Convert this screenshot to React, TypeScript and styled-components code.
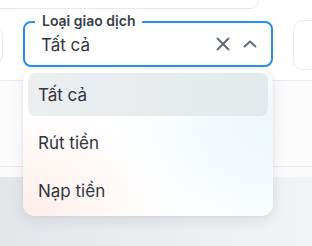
import React from "react";
import styled, { createGlobalStyle } from "styled-components";

const Global = createGlobalStyle`
  html, body { margin: 0; padding: 0; background: #ffffff; }
  body { font-family: Inter, "Noto Sans", "Liberation Sans", sans-serif; overflow: hidden; }
`;

const Page = styled.div`
  width: 312px;
  height: 246px;
  display: flex;
  flex-direction: column;
  background: #ffffff;
  overflow: hidden;
  position: relative;
`;

const TopCard = styled.div`
  height: 8px;
  margin-left: -20px;
  width: 277px;
  border: 1px solid #e6e8eb;
  border-top: none;
  border-radius: 0 0 12px 12px;
  background: #ffffff;
  flex-shrink: 0;
`;

const FilterRow = styled.div`
  display: flex;
  align-items: center;
  gap: 20px;
  margin-top: 12px;
  margin-left: -29px;
  height: 48px;
  flex-shrink: 0;
`;

const SideBox = styled.div<{ $h: number; $w: number }>`
  width: ${(p) => p.$w}px;
  height: ${(p) => p.$h}px;
  border: 1px solid #e8eaed;
  border-radius: 10px;
  background: #ffffff;
  flex-shrink: 0;
`;

const SelectWrap = styled.div`
  position: relative;
  width: 250px;
  flex-shrink: 0;
  align-self: flex-start;
`;

const Field = styled.div`
  position: relative;
  box-sizing: border-box;
  height: 46px;
  border: 2px solid #2590f0;
  border-radius: 8px;
  display: flex;
  align-items: center;
  padding: 0 12px 0 16px;
  background: #ffffff;
`;

const Label = styled.span`
  position: absolute;
  top: -10px;
  left: 10px;
  padding: 0 7px;
  background: #ffffff;
  font-size: 14px;
  font-weight: 600;
  line-height: 16px;
  color: #38404a;
`;

const Value = styled.span`
  flex: 1;
  font-size: 17px;
  color: #2f353d;
  line-height: 20px;
  padding-top: 1px;
`;

const IconBtn = styled.span`
  display: flex;
  align-items: center;
  justify-content: center;
  width: 18px;
  height: 18px;
  color: #606b76;
  margin-left: 9px;
`;

const Menu = styled.div`
  position: absolute;
  top: 49px;
  left: 0;
  width: 250px;
  box-sizing: border-box;
  padding: 3px 5px 4px;
  display: flex;
  flex-direction: column;
  gap: 5px;
  border-radius: 11px;
  background:
    radial-gradient(ellipse 140px 110px at 0% 100%, rgba(253, 236, 232, 0.9), rgba(253, 236, 232, 0) 100%),
    radial-gradient(ellipse 160px 120px at 100% 40%, rgba(236, 247, 252, 0.95), rgba(236, 247, 252, 0) 100%),
    #ffffff;
  box-shadow: 0 4px 14px rgba(30, 40, 60, 0.1), 0 0 3px rgba(30, 40, 60, 0.06);
  z-index: 2;
`;

const Item = styled.div<{ $active?: boolean }>`
  height: 43px;
  display: flex;
  align-items: center;
  padding-left: 10px;
  border-radius: 8px;
  font-size: 17px;
  color: #2f353d;
  background: ${(p) =>
    p.$active ? "linear-gradient(90deg, #eceef0, #e3e9ea)" : "transparent"};
`;

const Section = styled.div`
  margin-top: 11px;
  height: 85px;
  border-top: 1px solid #ebedf0;
  border-bottom: 1px solid #e6e8eb;
  background: #fcfcfd;
  flex-shrink: 0;
`;

const Gap = styled.div`
  height: 10px;
  background: #fbfbfc;
  flex-shrink: 0;
`;

const Footer = styled.div`
  flex: 1;
  background: linear-gradient(90deg, #e3e6e9 0%, #eceef0 60%, #f2f3f5 100%);
`;

const XIcon = () => (
  <svg width="14" height="14" viewBox="0 0 14 14" fill="none">
    <path d="M1.5 1.5 L12.5 12.5 M12.5 1.5 L1.5 12.5" stroke="currentColor" strokeWidth="2" strokeLinecap="round" />
  </svg>
);

const ChevronUp = () => (
  <svg width="14" height="10" viewBox="0 0 14 10" fill="none">
    <path d="M1.5 7.5 L7 2.5 L12.5 7.5" stroke="currentColor" strokeWidth="2" strokeLinecap="round" strokeLinejoin="round" />
  </svg>
);

export default function App() {
  return (
    <>
      <Global />
      <Page>
        <TopCard />
        <FilterRow>
          <SideBox $w={30} $h={37} />
          <SelectWrap>
            <Field>
              <Label>Loại giao dịch</Label>
              <Value>Tất cả</Value>
              <IconBtn>
                <XIcon />
              </IconBtn>
              <IconBtn>
                <ChevronUp />
              </IconBtn>
            </Field>
            <Menu>
              <Item $active>Tất cả</Item>
              <Item>Rút tiền</Item>
              <Item>Nạp tiền</Item>
            </Menu>
          </SelectWrap>
          <SideBox $w={60} $h={48} />
        </FilterRow>
        <Section />
        <Gap />
        <Footer />
      </Page>
    </>
  );
}
